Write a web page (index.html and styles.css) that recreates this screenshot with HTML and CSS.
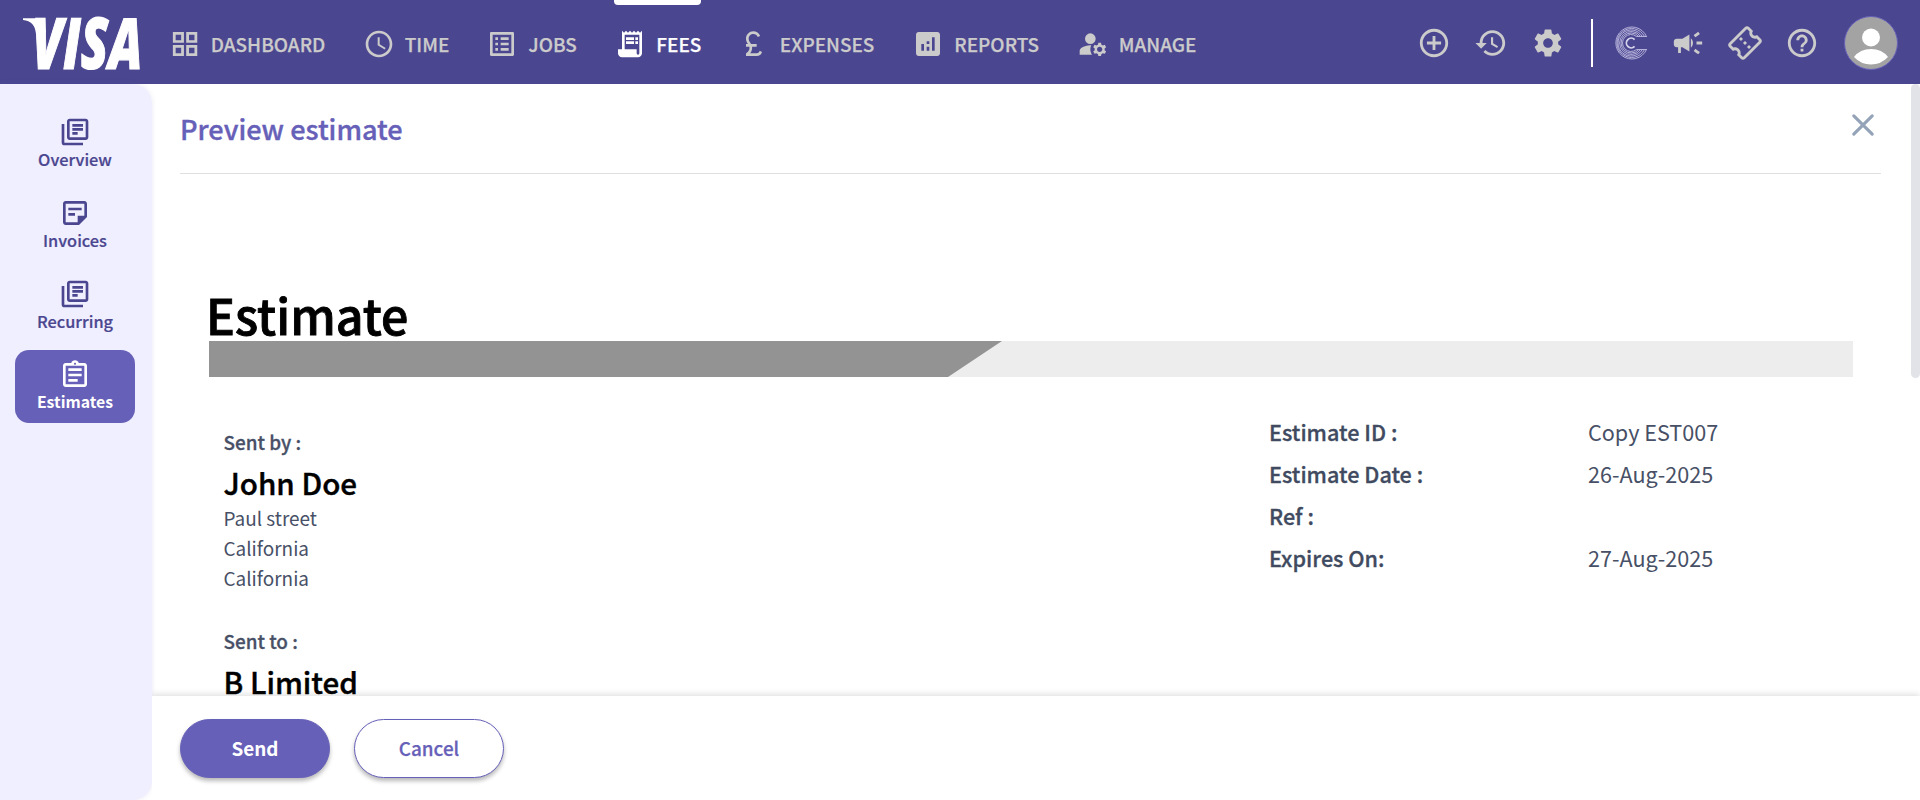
FILE: index.html
```html
<!DOCTYPE html>
<html lang="en">
<head>
<meta charset="utf-8">
<title>Preview estimate</title>
<link rel="stylesheet" href="styles.css">
</head>
<body>
<header class="topbar">
  <svg class="logo" width="128" height="62" viewBox="0 0 128 62" role="img" aria-label="VISA">
    <path d="M4 4.3H23L27 18L17 20Q16 7 4 6Z"/>
    <text class="logo-text" x="13" y="55" textLength="110.5" lengthAdjust="spacingAndGlyphs">VISA</text>
  </svg>
  <nav class="nav">
    <a class="nav-item"><svg class="icon" viewBox="0 0 24 24"><path d="M2.9 3H11.2V11.1H2.9zM5 5V9.1H9.1V5zM12.9 3H21.2V11.1H12.9zM15 5V9.1H19.1V5zM2.9 12.8H11.2V21H2.9zM5 14.9V18.9H9.1V14.9zM12.9 12.8H21.2V21H12.9zM15 14.9V18.9H19.1V14.9z" fill-rule="evenodd"/></svg><span>DASHBOARD</span></a>
    <a class="nav-item"><svg class="icon" viewBox="0 0 24 24"><path d="M11.99 2C6.47 2 2 6.48 2 12s4.47 10 9.99 10C17.52 22 22 17.52 22 12S17.52 2 11.99 2zM12 20c-4.42 0-8-3.58-8-8s3.58-8 8-8 8 3.58 8 8-3.58 8-8 8zm.5-13H11v6l5.25 3.15.75-1.23-4.5-2.67z"/></svg><span>TIME</span></a>
    <a class="nav-item"><svg class="icon" viewBox="0 0 24 24"><path d="M19 5v14H5V5h14m1.1-2H3.9c-.5 0-.9.4-.9.9v16.2c0 .4.4.9.9.9h16.2c.4 0 .9-.5.9-.9V3.9c0-.5-.5-.9-.9-.9zM11 7h6v2h-6zm0 4h6v2h-6zm0 4h6v2h-6zM7 7h2v2H7zm0 4h2v2H7zm0 4h2v2H7z"/></svg><span>JOBS</span></a>
    <a class="nav-item active"><svg class="icon" viewBox="0 0 24 24"><path d="M19.5 3.5L18 2l-1.5 1.5L15 2l-1.5 1.5L12 2l-1.5 1.5L9 2 7.5 3.5 6 2v14H3v3c0 1.66 1.34 3 3 3h12c1.66 0 3-1.34 3-3V2l-1.5 1.5zM19 19c0 .55-.45 1-1 1s-1-.45-1-1v-3H8V5h11v14zM9 7h6v2H9zM16 7h2v2h-2zM9 10h6v2H9zM16 10h2v2h-2z"/></svg><span>FEES</span></a>
    <a class="nav-item"><svg class="icon" viewBox="0 0 24 24"><path d="M14 21c1.93 0 3.62-1.17 4-3l-1.75-.88C16 18.21 15.33 19 14 19H9.1c.83-1 1.5-2.34 1.5-4 0-.35-.03-.69-.08-1H14v-2H9.82C9 10.42 8 9.6 8 8c0-1.93 1.57-3.5 3.5-3.5 1.5 0 2.79.95 3.28 2.28L16.63 6C15.82 3.95 13.83 2.5 11.5 2.5 8.46 2.5 6 4.96 6 8c0 1.78.79 2.9 1.49 4H6v2h2.47c.08.31.13.64.13 1 0 2.7-2.6 4-2.6 4v2h8z"/></svg><span>EXPENSES</span></a>
    <a class="nav-item"><svg class="icon" viewBox="0 0 24 24"><path d="M19 3H5c-1.1 0-2 .9-2 2v14c0 1.1.9 2 2 2h14c1.1 0 2-.9 2-2V5c0-1.1-.9-2-2-2zM9 17H7v-5h2v5zm4 0h-2v-3h2v3zm0-5h-2v-2h2v2zm4 5h-2V7h2v10z"/></svg><span>REPORTS</span></a>
    <a class="nav-item"><svg class="icon" viewBox="0 0 24 24"><path d="M10 4a4 4 0 1 0 0 8a4 4 0 0 0 0-8zM10.67 13.02C10.45 13.01 10.23 13 10 13c-2.42 0-4.68.67-6.61 1.82C2.51 15.34 2 16.32 2 17.35V20h9.26C10.47 18.87 10 17.49 10 16c0-1.07.25-2.07.67-2.98zM20.75 16c0-.22-.03-.42-.06-.63l1.14-1.01-1-1.73-1.45.49c-.32-.27-.68-.48-1.08-.63L18 11h-2l-.3 1.49c-.4.15-.76.36-1.08.63l-1.45-.49-1 1.73 1.14 1.01c-.03.21-.06.41-.06.63s.03.42.06.63l-1.14 1.01 1 1.73 1.45-.49c.32.27.68.48 1.08.63L16 21h2l.3-1.49c.4-.15.76-.36 1.08-.63l1.45.49 1-1.73-1.14-1.01c.03-.21.06-.41.06-.63zM17 18c-1.1 0-2-.9-2-2s.9-2 2-2 2 .9 2 2-.9 2-2 2z"/></svg><span>MANAGE</span></a>
  </nav>
  <div class="tools">
    <svg class="tool" viewBox="0 0 24 24"><path d="M13 7h-2v4H7v2h4v4h2v-4h4v-2h-4V7zm-1-5C6.48 2 2 6.48 2 12s4.48 10 10 10 10-4.48 10-10S17.52 2 12 2zm0 18c-4.41 0-8-3.59-8-8s3.59-8 8-8 8 3.59 8 8-3.59 8-8 8z"/></svg>
    <svg class="tool" viewBox="0 0 24 24"><path d="M13 3c-4.97 0-9 4.03-9 9H1l3.89 3.89.07.14L9 12H6c0-3.87 3.13-7 7-7s7 3.13 7 7-3.13 7-7 7c-1.93 0-3.68-.79-4.94-2.06l-1.42 1.42C8.27 19.99 10.51 21 13 21c4.97 0 9-4.03 9-9s-4.03-9-9-9zm-1 5v5l4.28 2.54.72-1.21-3.5-2.08V8H12z"/></svg>
    <svg class="tool" viewBox="0 0 24 24"><path d="M19.14 12.94c.04-.3.06-.61.06-.94 0-.32-.02-.64-.07-.94l2.03-1.58c.18-.14.23-.41.12-.61l-1.92-3.32c-.12-.22-.37-.29-.59-.22l-2.39.96c-.5-.38-1.03-.7-1.62-.94l-.36-2.54c-.04-.24-.24-.41-.48-.41h-3.84c-.24 0-.43.17-.47.41l-.36 2.54c-.59.24-1.13.57-1.62.94l-2.39-.96c-.22-.08-.47 0-.59.22L2.74 8.87c-.12.21-.08.47.12.61l2.03 1.58c-.05.3-.09.63-.09.94s.02.64.07.94l-2.03 1.58c-.18.14-.23.41-.12.61l1.92 3.32c.12.22.37.29.59.22l2.39-.96c.5.38 1.03.7 1.62.94l.36 2.54c.05.24.24.41.48.41h3.84c.24 0 .44-.17.47-.41l.36-2.54c.59-.24 1.13-.56 1.62-.94l2.39.96c.22.08.47 0 .59-.22l1.92-3.32c.12-.22.07-.47-.12-.61l-2.01-1.58zM12 15.4c-1.88 0-3.4-1.52-3.4-3.4s1.52-3.4 3.4-3.4 3.4 1.52 3.4 3.4-1.52 3.4-3.4 3.4z"/></svg>
    <span class="divider"></span>
    <svg class="tool rings" viewBox="0 0 34 34">
      <path d="M32.5 10.5A16 16 0 1 0 32.5 23.5M30.5 10.5A14.5 14.5 0 1 0 30.5 23.5M28.3 10.5A13 13 0 1 0 28.3 23.5M26.6 10.5A11.5 11.5 0 1 0 26.6 23.5M24.7 10.5A10 10 0 1 0 24.7 23.5M22.5 10.5A8.5 8.5 0 1 0 22.5 23.5M22.5 10.5H33M22.5 23.5H33"/>
      <path class="ring-core" d="M20.6 13.6A4.8 4.8 0 1 0 20.6 20.4"/>
    </svg>
    <svg class="tool" viewBox="0 0 24 24"><path d="M18 11v2h4v-2h-4zM16 17.61c.96.71 2.21 1.65 3.2 2.39.4-.53.8-1.07 1.2-1.6-.99-.74-2.24-1.68-3.2-2.4-.4.54-.8 1.08-1.2 1.61zM20.4 5.6c-.4-.53-.8-1.07-1.2-1.6-.99.74-2.24 1.68-3.2 2.4.4.53.8 1.07 1.2 1.6.96-.72 2.21-1.65 3.2-2.4zM4 9c-1.1 0-2 .9-2 2v2c0 1.1.9 2 2 2h1v4h2v-4h1l5 3V6L8 9H4zM15.5 12c0-1.33-.58-2.53-1.5-3.35v6.69c.92-.81 1.5-2.01 1.5-3.34z"/></svg>
    <svg class="tool" viewBox="0 0 24 24"><path transform="rotate(-45 12 12)" d="M22 10V6c0-1.11-.9-2-2-2H4c-1.1 0-1.99.89-1.99 2v4c1.1 0 1.99.9 1.99 2s-.89 2-2 2v4c0 1.1.9 2 2 2h16c1.1 0 2-.9 2-2v-4c-1.1 0-2-.9-2-2s.9-2 2-2zm-2-1.46c-1.19.69-2 1.99-2 3.46s.81 2.77 2 3.46V18H4v-2.54c1.19-.69 2-1.99 2-3.46 0-1.48-.8-2.77-1.99-3.46L4 6h16v2.54zM11 15h2v2h-2zm0-4h2v2h-2zm0-4h2v2h-2z"/></svg>
    <svg class="tool" viewBox="0 0 24 24"><path d="M11 18h2v-2h-2v2zm1-16C6.48 2 2 6.48 2 12s4.48 10 10 10 10-4.48 10-10S17.52 2 12 2zm0 18c-4.41 0-8-3.59-8-8s3.59-8 8-8 8 3.59 8 8-3.59 8-8 8zm0-14c-2.21 0-4 1.79-4 4h2c0-1.1.9-2 2-2s2 .9 2 2c0 2-3 1.75-3 5h2c0-2.25 3-2.5 3-5 0-2.21-1.79-4-4-4z"/></svg>
    <svg class="avatar" viewBox="0 0 54 54"><circle class="avatar-bg" cx="27" cy="27" r="26.5"/><circle cx="27" cy="21.5" r="9"/><path d="M10 41Q16 33 27 33T44 41Q37 48.5 27 48.5T10 41z"/></svg>
  </div>
</header>
<div class="body">
  <aside class="sidebar">
    <a class="side-item"><svg class="icon" viewBox="0 0 24 24"><path d="M20 2H8c-1.1 0-2 .9-2 2v12c0 1.1.9 2 2 2h12c1.1 0 2-.9 2-2V4c0-1.1-.9-2-2-2zm0 14H8V4h12v12zM10 9h8v2h-8zm0 3h4v2h-4zm0-6h8v2h-8zM4 6H2v14c0 1.1.9 2 2 2h14v-2H4V6z"/></svg><span>Overview</span></a>
    <a class="side-item"><svg class="icon" viewBox="0 0 24 24"><path d="M19 3H4.99C3.89 3 3 3.9 3 5l.01 14c0 1.1.89 2 1.99 2h10l6-6V5c0-1.1-.9-2-2-2zM7 8h10v2H7V8zm5 6H7v-2h5v2zM5 19V5h14v9h-5v5H5z" fill-rule="evenodd"/></svg><span>Invoices</span></a>
    <a class="side-item"><svg class="icon" viewBox="0 0 24 24"><path d="M20 2H8c-1.1 0-2 .9-2 2v12c0 1.1.9 2 2 2h12c1.1 0 2-.9 2-2V4c0-1.1-.9-2-2-2zm0 14H8V4h12v12zM10 9h8v2h-8zm0 3h4v2h-4zm0-6h8v2h-8zM4 6H2v14c0 1.1.9 2 2 2h14v-2H4V6z"/></svg><span>Recurring</span></a>
    <a class="side-item active"><svg class="icon" viewBox="0 0 24 24"><path d="M7 15h7v2H7zm0-4h10v2H7zm0-4h10v2H7zm12-4h-4.18C14.4 1.84 13.3 1 12 1s-2.4.84-2.82 2H5c-1.1 0-2 .9-2 2v14c0 1.1.9 2 2 2h14c1.1 0 2-.9 2-2V5c0-1.1-.9-2-2-2zm-7-.25c.41 0 .75.34.75.75s-.34.75-.75.75-.75-.34-.75-.75.34-.75.75-.75zM19 19H5V5h14v14z"/></svg><span>Estimates</span></a>
  </aside>
  <main class="main">
    <div class="scroll">
      <div class="page-head">
        <h1 class="page-title">Preview estimate</h1>
        <svg class="close" viewBox="0 0 24 24"><path d="M3.5 3.5L20.5 20.5M20.5 3.5L3.5 20.5"/></svg>
      </div>
      <section class="doc">
        <h2 class="doc-title">Estimate</h2>
        <svg class="band" viewBox="0 0 1644 36" preserveAspectRatio="none"><path class="band-light" d="M0 0H1644V36H0z"/><path class="band-dark" d="M0 0H793L739 36H0z"/></svg>
        <div class="doc-body">
          <div class="parties">
            <div class="party">
              <p class="party-label">Sent by :</p>
              <p class="party-name">John Doe</p>
              <p class="party-line">Paul street</p>
              <p class="party-line">California</p>
              <p class="party-line">California</p>
            </div>
            <div class="party">
              <p class="party-label">Sent to :</p>
              <p class="party-name">B Limited</p>
            </div>
          </div>
          <dl class="meta">
            <dt>Estimate ID :</dt><dd>Copy EST007</dd>
            <dt>Estimate Date :</dt><dd>26-Aug-2025</dd>
            <dt>Ref :</dt><dd></dd>
            <dt>Expires On:</dt><dd>27-Aug-2025</dd>
          </dl>
        </div>
      </section>
      <span class="scroll-thumb"></span>
    </div>
    <footer class="actions">
      <button class="btn btn-primary">Send</button>
      <button class="btn btn-outline">Cancel</button>
    </footer>
  </main>
</div>
</body>
</html>
```
FILE: styles.css
```css
* { box-sizing: border-box; }

body {
  margin: 0;
  height: 800px;
  display: flex;
  flex-direction: column;
  overflow: hidden;
  background: #fff;
  font-family: "Noto Sans CJK SC", "Noto Sans", sans-serif;
}

h1, h2, p, dl, dd { margin: 0; }

.topbar {
  flex: none;
  height: 84px;
  display: flex;
  background: #4b4690;
  color: #cbcbcb;
}

.logo { flex: none; margin: 14px 0 0 19px; fill: #fff; overflow: visible; }
.logo-text {
  font: italic 800 70px "Open Sans", sans-serif;
  fill: #fff;
  stroke: #fff;
  stroke-width: 1.2px;
}

.nav {
  display: grid;
  grid-template-columns: 194px 123.5px 128px 123.5px 174.5px 164.5px 130px;
  margin-left: 21.8px;
}

.nav-item {
  position: relative;
  display: flex;
  align-items: center;
  justify-self: start;
  gap: 10px;
  height: 88px;
  font-size: 18.95px;
  font-weight: 500;
  line-height: 28px;
  -webkit-text-stroke: .25px currentColor;
}
.nav-item.active { color: #fff; }
.nav-item.active::before {
  content: "";
  position: absolute;
  top: 0;
  left: 0;
  right: 0;
  height: 5px;
  border-radius: 0 0 4px 4px;
  background: #fff;
}

.icon { flex: none; width: 32px; height: 32px; fill: currentColor; }

.tools {
  display: flex;
  align-items: center;
  margin-left: auto;
  padding: 1px 22.5px 0 0;
  gap: 23px;
}
.tool { flex: none; width: 34px; height: 34px; fill: currentColor; }
.divider { width: 2px; height: 48px; margin: 0 -2px 0 3px; background: #fff; }
.rings path { fill: none; stroke: #b9b6dd; stroke-width: .95; }
.rings .ring-core { stroke: #d6d4ec; stroke-width: 1.8; }
.avatar { flex: none; width: 54px; height: 54px; margin-left: 1.5px; fill: #fff; }
.avatar-bg { fill: #a3a3a3; stroke: #6660b8; }

.body { flex: 1; display: flex; min-height: 0; }

.sidebar {
  flex: none;
  width: 152px;
  padding: 23px 17px 0 15px;
  border-radius: 0 20px 20px 0;
  background: #f0efff;
  box-shadow: 0 0 5px rgba(102, 96, 184, .14);
}
.side-item {
  display: flex;
  flex-direction: column;
  align-items: center;
  height: 73px;
  margin-bottom: 8px;
  padding-top: 9px;
  border-radius: 14px;
  color: #4b4690;
  font-size: 16.35px;
  font-weight: 500;
  line-height: 22px;
}
.side-item:not(.active) { -webkit-text-stroke: .2px currentColor; }
.side-item.active {
  background: #6660b8;
  color: #fff;
  font-size: 15.8px;
  font-weight: 700;
}

.main { flex: 1; min-width: 0; display: flex; flex-direction: column; }

.scroll {
  position: relative;
  flex: none;
  height: 612px;
  padding: 0 39px 0 28px;
  overflow: hidden;
}
.scroll-thumb {
  position: absolute;
  top: 0;
  right: 0;
  width: 9px;
  height: 294px;
  border-radius: 5px;
  background: #e2e3e8;
}

.page-head {
  display: flex;
  justify-content: space-between;
  height: 90px;
  border-bottom: 1px solid #e0e0e0;
}
.page-title {
  margin-top: 26px;
  color: #6660b8;
  font-size: 27.1px;
  font-weight: 500;
  line-height: 38px;
  -webkit-text-stroke: .35px currentColor;
}
.close {
  width: 26px;
  height: 26px;
  margin: 28px 5px 0 0;
  fill: none;
  stroke: #94a3b8;
  stroke-width: 2.9;
  stroke-linecap: round;
}

.doc { padding: 106px 28px 0 29px; }
.doc-title {
  height: 61px;
  margin-left: -3px;
  color: #000;
  font-size: 48.3px;
  font-weight: 500;
  line-height: 68px;
  -webkit-text-stroke: .9px currentColor;
}
.band { display: block; width: 1644px; height: 36px; }
.band-light { fill: #ededed; }
.band-dark { fill: #939393; }

.doc-body { display: flex; justify-content: space-between; padding: 34px 0 0 14.5px; }
.parties { padding-top: 16px; }
.party { margin-bottom: 33px; color: #475066; }
.party-label {
  font-size: 18.9px;
  font-weight: 500;
  line-height: 30px;
  -webkit-text-stroke: .3px currentColor;
}
.party-name {
  margin: 5px 0 -1px;
  color: #000;
  font-size: 29.6px;
  font-weight: 500;
  line-height: 42px;
  -webkit-text-stroke: .4px currentColor;
}
.party-line { font-size: 18.95px; line-height: 30px; }

.meta {
  display: grid;
  grid-template-columns: 319px 265px;
  grid-auto-rows: 42px;
  color: #475066;
  font-size: 21.6px;
  line-height: 42px;
}
.meta dt { color: #404a60; font-weight: 500; -webkit-text-stroke: .3px currentColor; }

.actions {
  position: relative;
  flex: 1;
  display: flex;
  gap: 24px;
  padding: 23px 28px;
  background: #fff;
  clip-path: inset(-8px 0 0 0);
  box-shadow: 0 -2px 6px rgba(0, 0, 0, .12);
}
.btn {
  width: 150px;
  height: 59px;
  padding: 0 0 2px;
  border: 1px solid #6660b8;
  border-radius: 30px;
  font-family: inherit;
  font-size: 18.9px;
  line-height: 28px;
  box-shadow: 0 3px 4px rgba(0, 0, 0, .28);
}
.btn-primary { background: #6660b8; color: #fff; font-weight: 700; }
.btn-outline { background: #fff; color: #6660b8; font-weight: 500; -webkit-text-stroke: .25px currentColor; }
```
